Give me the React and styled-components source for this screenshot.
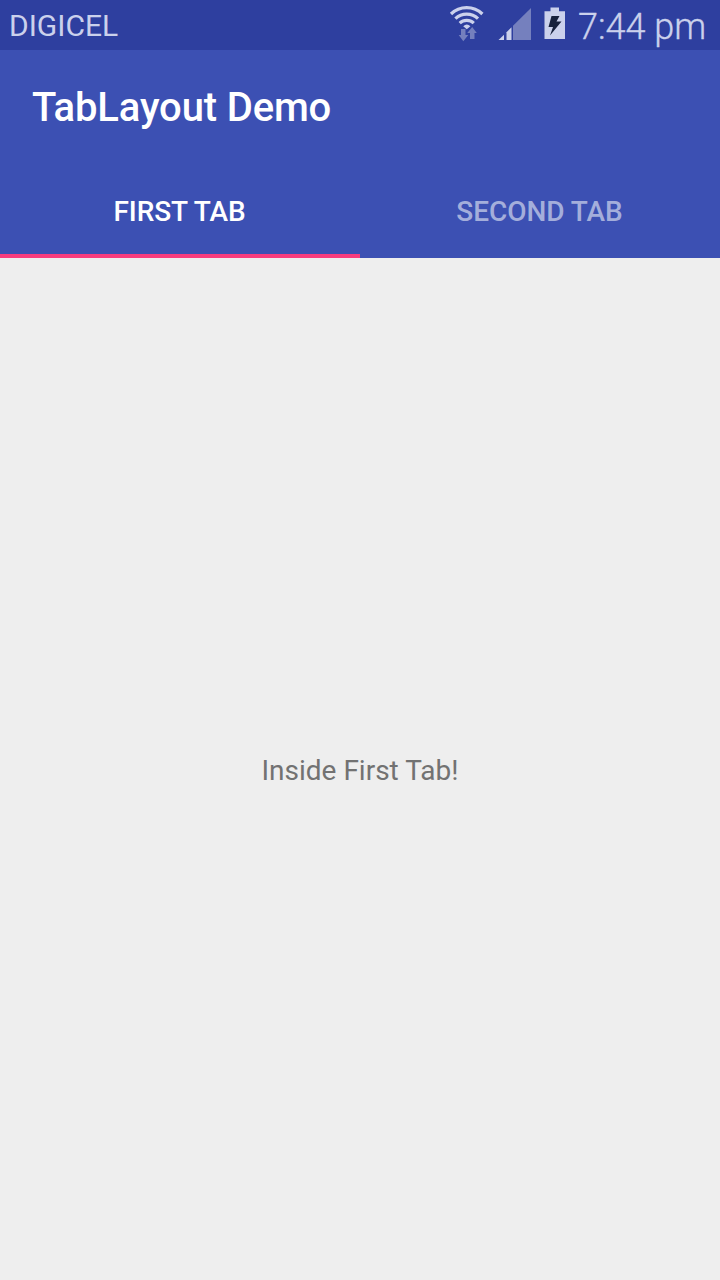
import React from 'react';
import styled, { createGlobalStyle } from 'styled-components';

const GlobalStyle = createGlobalStyle`
  body {
    margin: 0;
    font-family: Roboto, sans-serif;
  }
`;

const Screen = styled.div`
  display: flex;
  flex-direction: column;
  width: 720px;
  height: 1280px;
  overflow: hidden;
  background: #eeeeee;
`;

const StatusBar = styled.header`
  display: flex;
  align-items: center;
  box-sizing: border-box;
  height: 50px;
  padding: 0 14px 0 9px;
  background: #2e3f9f;
  color: #cbd1ec;
`;

const Carrier = styled.span`
  flex: 1;
  padding-top: 2px;
  font-size: 30px;
  line-height: 48px;
`;

const StatusIcons = styled.svg`
  width: 118px;
  height: 50px;
  margin-right: 11px;
`;

const Clock = styled.time`
  width: 128px;
  padding-top: 4px;
  font-size: 36px;
  font-weight: 300;
  line-height: 47px;
  text-align: right;
  white-space: nowrap;
  -webkit-text-stroke: 0.35px currentColor;
`;

const AppBar = styled.div`
  display: flex;
  align-items: center;
  height: 112px;
  padding: 0 32px;
  background: #3c50b3;
`;

const Title = styled.h1`
  margin: 4px 0 0;
  color: #ffffff;
  font-size: 40px;
  font-weight: 500;
  line-height: 48px;
  letter-spacing: -0.15px;
`;

const TabBar = styled.nav`
  display: flex;
  height: 96px;
  background: #3c50b3;
`;

const Tab = styled.button`
  flex: 1;
  box-sizing: border-box;
  padding: 7px 1px 0 0;
  border: 0;
  border-bottom: 4px solid ${({ $active }) => ($active ? '#f83c7e' : 'transparent')};
  background: transparent;
  color: ${({ $active }) => ($active ? '#ffffff' : '#a4aedb')};
  font: 500 28px/34px Roboto, sans-serif;
  letter-spacing: -0.05px;
`;

const TabPanel = styled.main`
  display: flex;
  flex: 1;
  align-items: center;
  justify-content: center;
`;

const Message = styled.p`
  margin: 3px 0 0;
  color: #727272;
  font-size: 28px;
  line-height: 34px;
`;

function StatusGlyphs() {
  return (
    <StatusIcons viewBox="449 0 118 50" aria-hidden="true">
      <g fill="none" stroke="#cbd1ec" strokeWidth="3.2">
        <path d="M451 14A22.5 22.5 0 0 1 482.4 14" />
        <path d="M455.4 18.7A16.2 16.2 0 0 1 478 18.7" />
        <path d="M459.7 23.2A10.3 10.3 0 0 1 473.8 23.2" />
      </g>
      <path d="M463.2 26.2Q466.8 23 470.4 26.2L466.8 29.2Z" fill="#cbd1ec" />
      <g fill="#747fbd">
        <path d="M461 29h4.5v6h2.8L463.3 41.2 458.7 35h2.3z" />
        <path d="M470 39v-6h-2.8l5-6 4.6 6h-2.3v6z" />
      </g>
      <path d="M498.5 40L504 34.8V40Z" fill="#cbd1ec" />
      <path d="M506.5 32.3L511.5 27.3V40H506.5Z" fill="#cbd1ec" />
      <path d="M513 25.8L531 8V40H513Z" fill="#7580be" />
      <path d="M544.5 11.2H550.5V7.5H559V11.2H565V39H544.5Z" fill="#cbd1ec" />
      <path d="M551.5 16H559.5L556.5 21.5H561.5L550 35.5L553 27H548.5Z" fill="#17213d" />
    </StatusIcons>
  );
}

export default function App() {
  return (
    <>
      <GlobalStyle />
      <Screen>
        <StatusBar>
          <Carrier>DIGICEL</Carrier>
          <StatusGlyphs />
          <Clock>7:44 pm</Clock>
        </StatusBar>
        <AppBar>
          <Title>TabLayout Demo</Title>
        </AppBar>
        <TabBar>
          <Tab $active>FIRST TAB</Tab>
          <Tab>SECOND TAB</Tab>
        </TabBar>
        <TabPanel>
          <Message>Inside First Tab!</Message>
        </TabPanel>
      </Screen>
    </>
  );
}
